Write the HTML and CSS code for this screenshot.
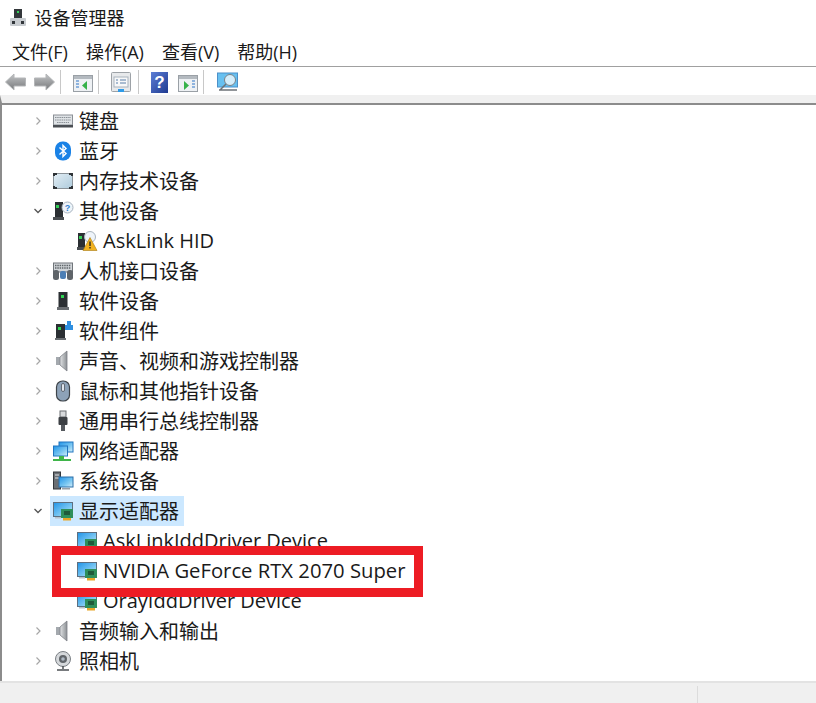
FILE: index.html
```html
<!DOCTYPE html>
<html lang="zh-CN">
<head>
<meta charset="utf-8">
<title>设备管理器</title>
<link rel="stylesheet" href="styles.css">
</head>
<body>
<svg class="defs" width="0" height="0">
  <defs>
    <linearGradient id="scr" x1="0" y1="0" x2="1" y2="1"><stop offset="0" stop-color="#1f93e8"/><stop offset=".6" stop-color="#7cc8f2"/><stop offset="1" stop-color="#d6effb"/></linearGradient>
    <linearGradient id="arr" x1="0" y1="0" x2="0" y2="1"><stop offset="0" stop-color="#c2c4c6"/><stop offset="1" stop-color="#77797b"/></linearGradient>
    <linearGradient id="hlp" x1="0" y1="0" x2="1" y2="1"><stop offset="0" stop-color="#5d7fd6"/><stop offset="1" stop-color="#1f3a90"/></linearGradient>
    <linearGradient id="mm" x1="0" y1="0" x2="1" y2="1"><stop offset="0" stop-color="#e3eef5"/><stop offset="1" stop-color="#aecbdc"/></linearGradient>
    <linearGradient id="spk" x1="0" y1="0" x2="1" y2="0"><stop offset="0" stop-color="#e2e4e6"/><stop offset="1" stop-color="#8c9094"/></linearGradient>
    <symbol id="chev-r" viewBox="0 0 10 10"><path d="M3.500 1.500 L7 5 L3.500 8.500" fill="none" stroke="#a6a6a6" stroke-width="1.200"/></symbol>
    <symbol id="chev-d" viewBox="0 0 10 10"><path d="M1.500 3 L5 6.500 L8.500 3" fill="none" stroke="#555" stroke-width="1.300"/></symbol>
    <symbol id="kbd" viewBox="0 0 22 22"><rect x="1.500" y="5" width="19" height="10" fill="#dfe3e6" stroke="#8b9096"/><path d="M3 7.500h16M3 10h16M5 12.500h12" stroke="#8a9096" stroke-width="1.200" stroke-dasharray="1.500 .7"/><rect x="1" y="15" width="20" height="2.500" fill="#4a4e53"/></symbol>
    <symbol id="bt" viewBox="0 0 22 22"><rect x="3" y="1.500" width="16" height="19" rx="7.500" fill="#1a82e6"/><path d="M7.500 7.500 L14 13.500 L11 16.500 V5.500 L14 8.500 L7.500 14.500" fill="none" stroke="#fff" stroke-width="1.400"/></symbol>
    <symbol id="mem" viewBox="0 0 22 22"><rect x="1.500" y="3.500" width="19" height="15" rx="1.500" fill="url(#mm)" stroke="#8a9298" stroke-width="1"/><path d="M1 3h4v2H3v1H1zM17 3h4v3h-2V5h-2zM1 16h2v1h2v2H1zM19 16h2v3h-4v-2h2z" fill="#2f3337"/></symbol>
    <symbol id="other" viewBox="0 0 22 22"><rect x="3" y="2" width="8" height="15" fill="#2b2f33"/><rect x="4" y="5" width="3" height="3" fill="#34d058"/><rect x="1" y="17" width="11" height="3" fill="#4a4e52"/><circle cx="15.500" cy="7.500" r="5.500" fill="#eef4fa" stroke="#a9b4bf"/><text x="15.500" y="11" class="q">?</text></symbol>
    <symbol id="warn" viewBox="0 0 22 22"><rect x="2" y="3" width="7" height="14" fill="#2b2f33"/><rect x="3" y="6" width="3" height="3" fill="#34d058"/><rect x="1" y="17" width="8" height="3" fill="#4a4e52"/><circle cx="14" cy="7" r="5.500" fill="#eef4fa" stroke="#a9b4bf"/><path d="M14 7.500 L21 20.500 H7 Z" fill="#f2b21f" stroke="#a87a10" stroke-width=".6"/><path d="M14 11.500v4.500M14 17v1.500" stroke="#222" stroke-width="1.300"/></symbol>
    <symbol id="hid" viewBox="0 0 22 22"><rect x="1.500" y="3" width="19" height="9" fill="#d0d4d8" stroke="#70757a"/><path d="M3 5.500h16M3 8h16" stroke="#5f6569" stroke-width="1.300" stroke-dasharray="1.500 .8"/><rect x="1" y="10" width="6" height="10" rx="2.500" fill="#5f6469"/><rect x="15" y="10" width="6" height="10" rx="2.500" fill="#5f6469"/><rect x="8" y="11" width="6" height="8" rx="2" fill="#4d7fb5"/></symbol>
    <symbol id="sw" viewBox="0 0 22 22"><rect x="6.500" y="2" width="9" height="15" fill="#2b2f33"/><rect x="9" y="5" width="3" height="3" fill="#2fd653"/><rect x="5" y="17" width="12" height="3" fill="#6a6e72"/></symbol>
    <symbol id="comp" viewBox="0 0 22 22"><rect x="4" y="4" width="9" height="14" fill="#2b2f33"/><rect x="6" y="7" width="3" height="3" fill="#2fd653"/><rect x="3" y="18" width="11" height="2" fill="#6a6e72"/><path d="M13 5h2V1h4v4h2v5h-8z" fill="#2f8fe0"/></symbol>
    <symbol id="audio" viewBox="0 0 22 22"><path d="M4 7h4v8H4z" fill="#a4a9ae"/><path d="M8 7 L15 1 V21 L8 15 Z" fill="url(#spk)" stroke="#7d8288" stroke-width=".8"/></symbol>
    <symbol id="mouse" viewBox="0 0 22 22"><rect x="4.500" y="1" width="13" height="20" rx="6" fill="#8da2b8" stroke="#3e444a" stroke-width="1.200"/><rect x="9.500" y="3.500" width="3" height="8" rx="1.500" fill="#dfe6ee" stroke="#3e444a" stroke-width=".7"/></symbol>
    <symbol id="usb" viewBox="0 0 22 22"><rect x="8" y="1" width="6" height="6" fill="#d8dadc" stroke="#6a6e72"/><rect x="6.500" y="7" width="9" height="8" rx="1" fill="#3c4044"/><rect x="9" y="15" width="4" height="6" fill="#55595e"/></symbol>
    <symbol id="net" viewBox="0 0 22 22"><rect x="7" y="2" width="14" height="10" fill="url(#scr)" stroke="#2276c0"/><rect x="1.500" y="6" width="14" height="10" fill="url(#scr)" stroke="#2276c0"/><rect x="1" y="19" width="18" height="2" fill="#3fb54a"/><rect x="7" y="16" width="5" height="4" fill="#3fb54a"/></symbol>
    <symbol id="sys" viewBox="0 0 22 22"><rect x="1.500" y="2" width="7" height="17" fill="#6a6f74" stroke="#33373b"/><path d="M3 5h4M3 8h4" stroke="#dfe2e5"/><rect x="7" y="7" width="14" height="10" fill="url(#scr)" stroke="#2a6ea8"/><rect x="10" y="18" width="8" height="1.500" fill="#9aa0a6"/></symbol>
    <symbol id="disp" viewBox="0 0 22 22"><rect x="1.500" y="2.500" width="19" height="14" fill="url(#scr)" stroke="#5d6f80"/><rect x="9" y="9" width="12" height="9" fill="#2f8f5b"/><rect x="12" y="11" width="6" height="4" fill="#1f5a3a"/><rect x="11" y="18" width="8" height="2.500" fill="#e8a526"/><rect x="3" y="17" width="6" height="1.500" fill="#b9c2ca"/></symbol>
    <symbol id="cam" viewBox="0 0 22 22"><circle cx="11" cy="9" r="7.500" fill="#d5d8db" stroke="#7a7f84"/><circle cx="11" cy="9" r="4" fill="#60656a"/><circle cx="11" cy="9" r="1.800" fill="#aeb9c4"/><path d="M11 16v3M5 20h12" stroke="#4c5054" stroke-width="1.500"/></symbol>
  </defs>
</svg>

<header class="titlebar">
  <svg class="app-icon" viewBox="0 0 18 20"><rect x="5" y="1" width="8" height="10" fill="#33373b"/><rect x="8" y="3" width="2" height="2" fill="#35d05a"/><rect x="1" y="10" width="16" height="8" rx="1" fill="#c8ccd0"/><rect x="3" y="13" width="3" height="3" fill="#33373b"/><rect x="12" y="13" width="3" height="3" fill="#33373b"/></svg>
  <span class="title">设备管理器</span>
</header>

<nav class="menubar">
  <span>文件(F)</span><span>操作(A)</span><span>查看(V)</span><span>帮助(H)</span>
</nav>

<div class="toolbar">
  <svg class="tb arrow" viewBox="0 0 21 18"><path d="M.5 9 L9 1 V5 H20.500 V13 H9 V17 Z" fill="url(#arr)" stroke="#b4b6b8"/></svg>
  <svg class="tb arrow" viewBox="0 0 21 18"><path d="M20.500 9 L12 1 V5 H.5 V13 H12 V17 Z" fill="url(#arr)" stroke="#b4b6b8"/></svg>
  <i class="sep"></i>
  <svg class="tb" viewBox="0 -1 20 20"><rect x=".5" y="2.500" width="19" height="16" fill="#eef1f4" stroke="#9aa0a6"/><rect x="1" y="3" width="18" height="3" fill="#b4bac0"/><path d="M14 8 V17 L9 12.500 Z" fill="#36b24a"/><path d="M3 8h3M3 11h3M3 14h3" stroke="#6f9ed6" stroke-width="1.500"/></svg>
  <i class="sep"></i>
  <svg class="tb" viewBox="0 0 20 20"><rect x=".5" y=".5" width="19" height="19" rx="1" fill="#e7e9eb" stroke="#9da2a7"/><rect x="3" y="5" width="14" height="10" fill="#f7f8f9" stroke="#a9b3bd"/><path d="M5 8h2M9 8h6M5 11h2M9 11h6" stroke="#5a7fa8"/><rect x="7" y="17" width="6" height="3" fill="#2f9be8"/></svg>
  <i class="sep wide"></i>
  <svg class="tb help" viewBox="0 0 17 21"><rect width="17" height="21" fill="url(#hlp)"/><text x="8.500" y="16" class="hq">?</text></svg>
  <svg class="tb play" viewBox="0 -1 20 20"><rect x=".5" y="2.500" width="19" height="16" fill="#eef1f4" stroke="#9aa0a6"/><rect x="1" y="3" width="18" height="3" fill="#b4bac0"/><path d="M6 8 V17 L11 12.500 Z" fill="#36b24a"/><path d="M14 8h3M14 11h3M14 14h3" stroke="#6f9ed6" stroke-width="1.500"/></svg>
  <i class="sep"></i>
  <svg class="tb scan" viewBox="0 0 23 20"><rect x="1.500" y="1" width="20" height="14" fill="#67c0f0" stroke="#4d90c8"/><circle cx="14" cy="8" r="5.500" fill="#d5eefb" stroke="#7b8288"/><path d="M10 12 L4 18 M3 18h18" stroke="#6d7378" stroke-width="1.500"/></svg>
</div>

<main class="tree-frame">
  <ul class="tree">
    <li class="row"><svg class="chev"><use href="#chev-r"/></svg><svg class="ico"><use href="#kbd"/></svg><span class="lbl">键盘</span></li>
    <li class="row"><svg class="chev"><use href="#chev-r"/></svg><svg class="ico"><use href="#bt"/></svg><span class="lbl">蓝牙</span></li>
    <li class="row"><svg class="chev"><use href="#chev-r"/></svg><svg class="ico"><use href="#mem"/></svg><span class="lbl">内存技术设备</span></li>
    <li class="row"><svg class="chev"><use href="#chev-d"/></svg><svg class="ico"><use href="#other"/></svg><span class="lbl">其他设备</span></li>
    <li class="row child"><svg class="ico"><use href="#warn"/></svg><span class="lbl">AskLink HID</span></li>
    <li class="row"><svg class="chev"><use href="#chev-r"/></svg><svg class="ico"><use href="#hid"/></svg><span class="lbl">人机接口设备</span></li>
    <li class="row"><svg class="chev"><use href="#chev-r"/></svg><svg class="ico"><use href="#sw"/></svg><span class="lbl">软件设备</span></li>
    <li class="row"><svg class="chev"><use href="#chev-r"/></svg><svg class="ico"><use href="#comp"/></svg><span class="lbl">软件组件</span></li>
    <li class="row"><svg class="chev"><use href="#chev-r"/></svg><svg class="ico"><use href="#audio"/></svg><span class="lbl">声音、视频和游戏控制器</span></li>
    <li class="row"><svg class="chev"><use href="#chev-r"/></svg><svg class="ico"><use href="#mouse"/></svg><span class="lbl">鼠标和其他指针设备</span></li>
    <li class="row"><svg class="chev"><use href="#chev-r"/></svg><svg class="ico"><use href="#usb"/></svg><span class="lbl">通用串行总线控制器</span></li>
    <li class="row"><svg class="chev"><use href="#chev-r"/></svg><svg class="ico"><use href="#net"/></svg><span class="lbl">网络适配器</span></li>
    <li class="row"><svg class="chev"><use href="#chev-r"/></svg><svg class="ico"><use href="#sys"/></svg><span class="lbl">系统设备</span></li>
    <li class="row"><svg class="chev"><use href="#chev-d"/></svg><span class="selected"><svg class="ico"><use href="#disp"/></svg><span class="lbl">显示适配器</span></span></li>
    <li class="row child"><svg class="ico"><use href="#disp"/></svg><span class="lbl">AskLinkIddDriver Device</span></li>
    <li class="row child highlighted"><svg class="ico"><use href="#disp"/></svg><span class="lbl">NVIDIA GeForce RTX 2070 Super</span><i class="redbox"></i></li>
    <li class="row child"><svg class="ico"><use href="#disp"/></svg><span class="lbl">OrayIddDriver Device</span></li>
    <li class="row"><svg class="chev"><use href="#chev-r"/></svg><svg class="ico"><use href="#audio"/></svg><span class="lbl">音频输入和输出</span></li>
    <li class="row"><svg class="chev"><use href="#chev-r"/></svg><svg class="ico"><use href="#cam"/></svg><span class="lbl">照相机</span></li>
  </ul>
</main>

<footer class="statusbar"><i class="status-main"></i><i class="status-side"></i></footer>
</body>
</html>
```

FILE: styles.css
```css
* { box-sizing: border-box; }
html, body { margin: 0; padding: 0; }
body {
  width: 816px;
  height: 703px;
  overflow: hidden;
  background: #fff;
  color: #1a1a1a;
  font-family: "Open Sans", "Noto Sans CJK SC", sans-serif;
  display: flex;
  flex-direction: column;
}
.defs { position: absolute; }
.q { font: bold 9px "Liberation Sans", sans-serif; fill: #2f7fd0; text-anchor: middle; }
.hq { font: bold 17px "Liberation Sans", sans-serif; fill: #fff; text-anchor: middle; }

.titlebar { height: 36px; flex: none; display: flex; align-items: center; padding-left: 9px; gap: 7.5px; }
.title { font-size: 18px; line-height: 36px; }
.app-icon { display: block; width: 18px; height: 20px; }

.menubar { height: 31px; flex: none; display: flex; align-items: center; padding: 0 0 1px 12px; gap: 18px; font-size: 18px; border-bottom: 1px solid #a0a0a0; }

.toolbar { height: 28px; flex: none; display: flex; align-items: center; padding: 2px 0 0 5px; background: #fff; }
.tb { width: 20px; height: 20px; display: block; flex: none; }
.arrow { width: 21px; height: 18px; }
.arrow + .arrow { margin-left: 8px; }
.sep { width: 1px; height: 24px; background: #c8c8c8; margin: 0 12px 0 5px; flex: none; }
.sep.wide { margin-left: 7px; }
.help { width: 17px; height: 21px; }
.play { margin-left: 10px; }
.scan { width: 23px; }

.tree-frame { flex: 1; min-height: 0; background: #fff; border-top: 8px solid #f0f0f0; border-left: 2px solid #8c8c8c; box-shadow: inset 0 2px 0 #8c8c8c; padding-top: 3px; overflow: hidden; }
.tree { list-style: none; margin: 0; padding: 0; }
.row { height: 30px; display: flex; align-items: center; padding-left: 31px; position: relative; }
.child { padding-left: 74px; }
.chev { width: 10px; height: 10px; flex: none; margin-right: 9px; }
.ico { width: 22px; height: 22px; flex: none; margin-right: 5px; }
.lbl { font-size: 20px; line-height: 30px; white-space: nowrap; padding-top: 2px; }
.child .lbl { padding-top: 0; }
.highlighted .lbl { font-size: 20.25px; padding-bottom: 2px; }
.selected { display: flex; align-items: center; background: #cce8ff; height: 30px; margin-left: -2px; padding: 0 5px 0 2px; }
.highlighted { z-index: 1; }
.redbox { position: absolute; left: 50px; top: -10px; width: 371px; height: 51px; border: 9px solid #ed1c24; pointer-events: none; }

.statusbar { height: 22px; flex: none; background: #f0f0f0; border-top: 2px solid #e3e3e3; display: flex; }
.status-main { width: 697px; }
.status-side { width: 1px; background: #dcdcdc; margin-top: 3px; }
```
